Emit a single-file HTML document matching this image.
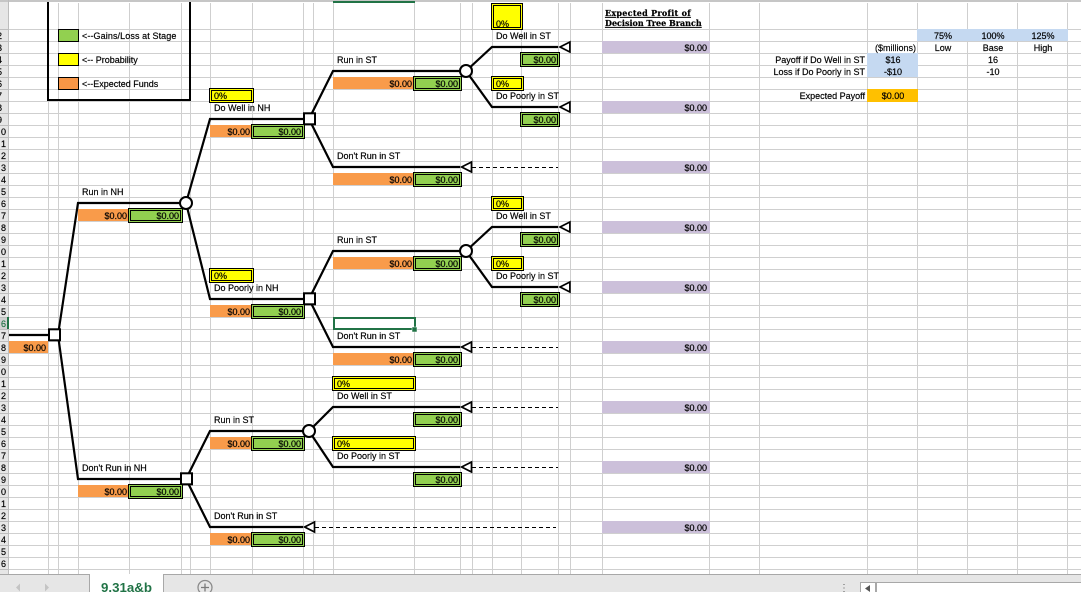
<!DOCTYPE html>
<html><head><meta charset="utf-8"><style>
html,body{margin:0;padding:0;background:#fff;width:1081px;height:592px;overflow:hidden}
svg{display:block;position:absolute;left:0;top:0}
text{font-family:"Liberation Sans",sans-serif;font-size:9px;fill:#000;stroke:#000;stroke-width:.18}
.e{text-anchor:end}.m{text-anchor:middle}
.l{fill:none;stroke:#000;stroke-width:2.2}
.n{fill:#fff;stroke:#000;stroke-width:2}
.s{fill:#fff;stroke:#000;stroke-width:2}
.tr{fill:#fff;stroke:#000;stroke-width:1.7}
.d{fill:none;stroke:#000;stroke-width:1;stroke-dasharray:4 3}
text.h{font-family:"DejaVu Serif",serif;font-weight:bold;font-size:8px;text-decoration:underline;stroke-width:.2}
</style></head><body>
<svg width="1081" height="592" viewBox="0 0 1081 592">
<defs>
<g id="g52"><rect x="-.5" y="-.5" width="54" height="14" fill="#92d050" stroke="#000" shape-rendering="crispEdges"/><rect x="1.5" y="1.5" width="50" height="10" fill="none" stroke="#000" shape-rendering="crispEdges"/></g>
<g id="g51"><rect x="-.5" y="-.5" width="53" height="14" fill="#92d050" stroke="#000" shape-rendering="crispEdges"/><rect x="1.5" y="1.5" width="49" height="10" fill="none" stroke="#000" shape-rendering="crispEdges"/></g>
<g id="g46"><rect x="-.5" y="-.5" width="48" height="14" fill="#92d050" stroke="#000" shape-rendering="crispEdges"/><rect x="1.5" y="1.5" width="44" height="10" fill="none" stroke="#000" shape-rendering="crispEdges"/></g>
<g id="g37"><rect x="-.5" y="-.5" width="39" height="14" fill="#92d050" stroke="#000" shape-rendering="crispEdges"/><rect x="1.5" y="1.5" width="35" height="10" fill="none" stroke="#000" shape-rendering="crispEdges"/></g>
<g id="y42"><rect x="-.5" y="-.5" width="44" height="14" fill="#ff0" stroke="#000" shape-rendering="crispEdges"/><rect x="1.5" y="1.5" width="40" height="10" fill="none" stroke="#000" shape-rendering="crispEdges"/></g>
<g id="y30"><rect x="-.5" y="-.5" width="32" height="14" fill="#ff0" stroke="#000" shape-rendering="crispEdges"/><rect x="1.5" y="1.5" width="28" height="10" fill="none" stroke="#000" shape-rendering="crispEdges"/></g>
<g id="y81"><rect x="-.5" y="-.5" width="83" height="14" fill="#ff0" stroke="#000" shape-rendering="crispEdges"/><rect x="1.5" y="1.5" width="79" height="10" fill="none" stroke="#000" shape-rendering="crispEdges"/></g>
<path id="t" d="M0 0L9.9 -5V5Z" class="tr"/>
</defs>

<!-- grid -->
<path shape-rendering="crispEdges" stroke="#cfcfcf" fill="none" d="M0 29.5H1081M0 41.5H1081M0 53.5H1081M0 65.5H1081M0 77.5H1081M0 89.5H1081M0 101.5H1081M0 113.5H1081M0 125.5H1081M0 137.5H1081M0 149.5H1081M0 161.5H1081M0 173.5H1081M0 185.5H1081M0 197.5H1081M0 209.5H1081M0 221.5H1081M0 233.5H1081M0 245.5H1081M0 257.5H1081M0 269.5H1081M0 281.5H1081M0 293.5H1081M0 305.5H1081M0 317.5H1081M0 329.5H1081M0 341.5H1081M0 353.5H1081M0 365.5H1081M0 377.5H1081M0 389.5H1081M0 401.5H1081M0 413.5H1081M0 425.5H1081M0 437.5H1081M0 449.5H1081M0 461.5H1081M0 473.5H1081M0 485.5H1081M0 497.5H1081M0 509.5H1081M0 521.5H1081M0 533.5H1081M0 545.5H1081M0 557.5H1081M0 569.5H1081M48.5 3V574M58.5 3V574M78.5 3V574M129.5 3V574M181.5 3V574M190.5 3V574M210.5 3V574M252.5 3V574M303.5 3V574M313.5 3V574M333.5 3V574M414.5 3V574M460.5 3V574M472.5 3V574M492.5 3V574M521.5 3V574M558.5 3V574M570.5 3V574M602.5 3V574M709.5 3V574M759.5 3V574M867.5 3V574M917.5 3V574M967.5 3V574M1017.5 3V574M1067.5 3V574"/>
<rect x="0" y="0" width="1081" height="2" fill="#c6c6c6"/>

<!-- row header -->
<rect x="0" y="2" width="8" height="572" fill="#e6e6e6"/>
<path shape-rendering="crispEdges" stroke="#bdbdbd" fill="none" d="M0 29.5H8M0 41.5H8M0 53.5H8M0 65.5H8M0 77.5H8M0 89.5H8M0 101.5H8M0 113.5H8M0 125.5H8M0 137.5H8M0 149.5H8M0 161.5H8M0 173.5H8M0 185.5H8M0 197.5H8M0 209.5H8M0 221.5H8M0 233.5H8M0 245.5H8M0 257.5H8M0 269.5H8M0 281.5H8M0 293.5H8M0 305.5H8M0 317.5H8M0 329.5H8M0 341.5H8M0 353.5H8M0 365.5H8M0 377.5H8M0 389.5H8M0 401.5H8M0 413.5H8M0 425.5H8M0 437.5H8M0 449.5H8M0 461.5H8M0 473.5H8M0 485.5H8M0 497.5H8M0 509.5H8M0 521.5H8M0 533.5H8M0 545.5H8M0 557.5H8M0 569.5H8M8.5 0V574"/>
<rect x="0" y="318" width="8" height="11" fill="#d2d2d2"/><rect x="7" y="317" width="2" height="12" fill="#217346"/>
<g class="rows">
<text class="e" x="2" y="39">2</text><text class="e" x="2" y="51">3</text><text class="e" x="2" y="63">4</text><text class="e" x="2" y="75">5</text><text class="e" x="2" y="87">6</text><text class="e" x="2" y="99">7</text><text class="e" x="2" y="111">8</text><text class="e" x="2" y="123">9</text>
<text class="e" x="6" y="135">0</text><text class="e" x="6" y="147">1</text><text class="e" x="6" y="159">2</text><text class="e" x="6" y="171">3</text><text class="e" x="6" y="183">4</text><text class="e" x="6" y="195">5</text><text class="e" x="6" y="207">6</text><text class="e" x="6" y="219">7</text><text class="e" x="6" y="231">8</text><text class="e" x="6" y="243">9</text>
<text class="e" x="6" y="255">0</text><text class="e" x="6" y="267">1</text><text class="e" x="6" y="279">2</text><text class="e" x="6" y="291">3</text><text class="e" x="6" y="303">4</text><text class="e" x="6" y="315">5</text><text class="e" x="6" y="327" style="fill:#217346;stroke:#217346">6</text><text class="e" x="6" y="339">7</text><text class="e" x="6" y="351">8</text><text class="e" x="6" y="363">9</text>
<text class="e" x="6" y="375">0</text><text class="e" x="6" y="387">1</text><text class="e" x="6" y="399">2</text><text class="e" x="6" y="411">3</text><text class="e" x="6" y="423">4</text><text class="e" x="6" y="435">5</text><text class="e" x="6" y="447">6</text><text class="e" x="6" y="459">7</text><text class="e" x="6" y="471">8</text><text class="e" x="6" y="483">9</text>
<text class="e" x="6" y="495">0</text><text class="e" x="6" y="507">1</text><text class="e" x="6" y="519">2</text><text class="e" x="6" y="531">3</text><text class="e" x="6" y="543">4</text><text class="e" x="6" y="555">5</text><text class="e" x="6" y="567">6</text>
</g>

<!-- legend -->
<path fill="none" stroke="#000" stroke-width="2" shape-rendering="crispEdges" d="M48 2V100H190V2"/>
<g shape-rendering="crispEdges" stroke="#000">
<rect x="58.5" y="29.5" width="20" height="12" fill="#92d050"/>
<rect x="58.5" y="53.5" width="20" height="12" fill="#ff0"/>
<rect x="58.5" y="77.5" width="20" height="12" fill="#f79646"/>
</g>
<text x="82" y="39" style="letter-spacing:.1px">&lt;--Gains/Loss at Stage</text>
<text x="82" y="63">&lt;-- Probability</text>
<text x="82" y="87">&lt;--Expected Funds</text>

<!-- fills -->
<g fill="#f99b4a" shape-rendering="crispEdges">
<rect x="9" y="341" width="39" height="12"/>
<rect x="78" y="209" width="51" height="12"/><rect x="78" y="485" width="51" height="12"/>
<rect x="210" y="125" width="42" height="12"/><rect x="210" y="305" width="42" height="12"/><rect x="210" y="437" width="42" height="12"/><rect x="210" y="533" width="42" height="12"/>
<rect x="333" y="77" width="81" height="12"/><rect x="333" y="173" width="81" height="12"/><rect x="333" y="257" width="81" height="12"/><rect x="333" y="353" width="81" height="12"/>
</g>
<g fill="#ccc0da" shape-rendering="crispEdges">
<rect x="602" y="41" width="108" height="12"/><rect x="602" y="101" width="108" height="12"/><rect x="602" y="161" width="108" height="12"/><rect x="602" y="221" width="108" height="12"/><rect x="602" y="281" width="108" height="12"/><rect x="602" y="341" width="108" height="12"/><rect x="602" y="401" width="108" height="12"/><rect x="602" y="461" width="108" height="12"/><rect x="602" y="521" width="108" height="12"/>
</g>
<g fill="#c5d9f1" shape-rendering="crispEdges">
<rect x="917" y="29" width="151" height="12"/><rect x="867" y="53" width="51" height="24"/>
</g>
<rect x="867" y="89" width="51" height="13" fill="#ffc000" shape-rendering="crispEdges"/>

<!-- tree lines -->
<path class="l" d="M9 335H49M58 335L78 203H180M58 335L78 479H180M186 203L210 119H303M186 203L210 299H303M186 479L210 431H303M186 479L210 527H303M309 119L333 71H460M309 119L333 167H460M309 299L333 251H460M309 299L333 347H460M309 431L333 407H460M309 431L333 467H460M466 71L492 47H558M466 71L492 107H558M466 251L492 227H558M466 251L492 287H558"/>
<path class="d" d="M472 167.5H558M472 347.5H558M472 407.5H558M472 467.5H558M315 527.5H556"/>

<!-- nodes -->
<rect class="s" x="49" y="329.3" width="11" height="11"/>
<rect class="s" x="304" y="113.3" width="11" height="11"/>
<rect class="s" x="304" y="293.3" width="11" height="11"/>
<rect class="s" x="181" y="473.3" width="11" height="11"/>
<circle class="n" cx="186" cy="203" r="6"/>
<circle class="n" cx="466" cy="71" r="6"/>
<circle class="n" cx="466" cy="251" r="6"/>
<circle class="n" cx="309" cy="431" r="6"/>
<use href="#t" x="560" y="47"/><use href="#t" x="560" y="107"/><use href="#t" x="560" y="227"/><use href="#t" x="560" y="287"/>
<use href="#t" x="461.6" y="167"/><use href="#t" x="461.6" y="347"/><use href="#t" x="461.6" y="407"/><use href="#t" x="461.6" y="467"/><use href="#t" x="304.6" y="527"/>

<!-- green cells -->
<use href="#g52" x="129" y="209"/><use href="#g52" x="129" y="485"/>
<use href="#g51" x="252" y="125"/><use href="#g51" x="252" y="305"/><use href="#g51" x="252" y="437"/><use href="#g51" x="252" y="533"/>
<use href="#g46" x="414" y="77"/><use href="#g46" x="414" y="173"/><use href="#g46" x="414" y="257"/><use href="#g46" x="414" y="353"/><use href="#g46" x="414" y="413"/><use href="#g46" x="414" y="473"/>
<use href="#g37" x="521" y="53"/><use href="#g37" x="521" y="113"/><use href="#g37" x="521" y="233"/><use href="#g37" x="521" y="293"/>

<!-- yellow cells -->
<use href="#y42" x="210" y="89"/><use href="#y42" x="210" y="269"/>
<use href="#y30" x="492" y="77"/><use href="#y30" x="492" y="197"/><use href="#y30" x="492" y="257"/>
<use href="#y81" x="333" y="377"/><use href="#y81" x="333" y="437"/>
<rect x="491.5" y="3.5" width="31" height="26" fill="#ff0" stroke="#000" shape-rendering="crispEdges"/>
<rect x="493.5" y="5.5" width="27" height="22" fill="none" stroke="#000" shape-rendering="crispEdges"/>

<!-- selection -->
<rect x="333" y="1" width="82" height="2" fill="#217346"/>
<rect x="334" y="318" width="81" height="11" fill="none" stroke="#217346" stroke-width="2"/>
<rect x="412" y="327" width="5" height="5" fill="#217346" stroke="#fff" stroke-width=".5"/>

<!-- percent -->
<text x="214" y="99">0%</text><text x="214" y="279">0%</text><text x="496" y="87">0%</text><text x="496" y="207">0%</text><text x="496" y="267">0%</text><text x="337" y="387">0%</text><text x="337" y="447">0%</text><text x="496" y="27">0%</text>

<!-- labels -->
<text x="82" y="195">Run in NH</text>
<text x="82" y="471">Don't Run in NH</text>
<text x="214" y="111">Do Well in NH</text>
<text x="214" y="291">Do Poorly in NH</text>
<text x="214" y="423">Run in ST</text>
<text x="214" y="519">Don't Run in ST</text>
<text x="337" y="63">Run in ST</text>
<text x="337" y="159">Don't Run in ST</text>
<text x="337" y="243">Run in ST</text>
<text x="337" y="339">Don't Run in ST</text>
<text x="337" y="399">Do Well in ST</text>
<text x="337" y="459">Do Poorly in ST</text>
<text x="496" y="39">Do Well in ST</text>
<text x="496" y="99">Do Poorly in ST</text>
<text x="496" y="219">Do Well in ST</text>
<text x="496" y="279">Do Poorly in ST</text>

<!-- values -->
<g text-anchor="end">
<text x="46" y="351">$0.00</text>
<text x="127" y="219">$0.00</text><text x="127" y="495">$0.00</text>
<text x="179" y="219">$0.00</text><text x="179" y="495">$0.00</text>
<text x="250" y="135">$0.00</text><text x="250" y="315">$0.00</text><text x="250" y="447">$0.00</text><text x="250" y="543">$0.00</text>
<text x="301" y="135">$0.00</text><text x="301" y="315">$0.00</text><text x="301" y="447">$0.00</text><text x="301" y="543">$0.00</text>
<text x="412" y="87">$0.00</text><text x="412" y="183">$0.00</text><text x="412" y="267">$0.00</text><text x="412" y="363">$0.00</text>
<text x="458" y="87">$0.00</text><text x="458" y="183">$0.00</text><text x="458" y="267">$0.00</text><text x="458" y="363">$0.00</text><text x="458" y="423">$0.00</text><text x="458" y="483">$0.00</text>
<text x="556" y="63">$0.00</text><text x="556" y="123">$0.00</text><text x="556" y="243">$0.00</text><text x="556" y="303">$0.00</text>
<text x="707" y="51">$0.00</text><text x="707" y="111">$0.00</text><text x="707" y="171">$0.00</text><text x="707" y="231">$0.00</text><text x="707" y="291">$0.00</text><text x="707" y="351">$0.00</text><text x="707" y="411">$0.00</text><text x="707" y="471">$0.00</text><text x="707" y="531">$0.00</text>
<text x="916" y="51">($millions)</text>
<text x="865" y="63">Payoff if Do Well in ST</text>
<text x="865" y="75">Loss if Do Poorly in ST</text>
<text x="865" y="99">Expected Payoff</text>
</g>

<!-- header -->
<text class="h" x="605" y="16" style="letter-spacing:.28px">Expected Profit of</text>
<text class="h" x="605" y="26">Decision Tree Branch</text>

<!-- right table -->
<g text-anchor="middle">
<text x="943" y="39">75%</text><text x="993" y="39">100%</text><text x="1043" y="39">125%</text>
<text x="943" y="51">Low</text><text x="993" y="51">Base</text><text x="1043" y="51">High</text>
<text x="893" y="63">$16</text><text x="893" y="75">-$10</text>
<text x="993" y="63">16</text><text x="993" y="75">-10</text>
<text x="893" y="99">$0.00</text>
</g>

<!-- bottom bar -->
<rect x="0" y="574" width="1081" height="18" fill="#e6e6e6"/>
<rect x="0" y="574" width="1081" height="1" fill="#a8a8a8"/>
<rect x="90" y="574" width="73" height="18" fill="#fff"/>
<path shape-rendering="crispEdges" stroke="#a8a8a8" fill="none" d="M89.5 574V592M163.5 574V592"/>
<text x="101" y="592" style="font-size:13.3px;font-weight:bold;fill:#217346;stroke:none">9.31a&amp;b</text>
<path d="M16 587.5L20 583.5V591.5Z" fill="#c4c4c4"/>
<path d="M49 587.5L45 583.5V591.5Z" fill="#c4c4c4"/>
<circle cx="205" cy="587.5" r="7" fill="none" stroke="#8a8a8a" stroke-width="1.3"/>
<path d="M201 587.5H209M205 583.5V591.5" stroke="#7a7a7a" stroke-width="1.3" fill="none"/>
<path d="M844 584V585M844 587.5V588.5M844 591V592" stroke="#a0a0a0" stroke-width="2" fill="none"/>
<rect x="860" y="582" width="221" height="10" fill="#fff"/>
<rect x="860" y="582" width="221" height="1" fill="#a8a8a8"/>
<rect x="860" y="582" width="1" height="10" fill="#a8a8a8"/>
<rect x="875" y="582" width="2" height="10" fill="#a8a8a8"/>
<path d="M865 588.5L870 585V592Z" fill="#555"/>
</svg>
</body></html>
